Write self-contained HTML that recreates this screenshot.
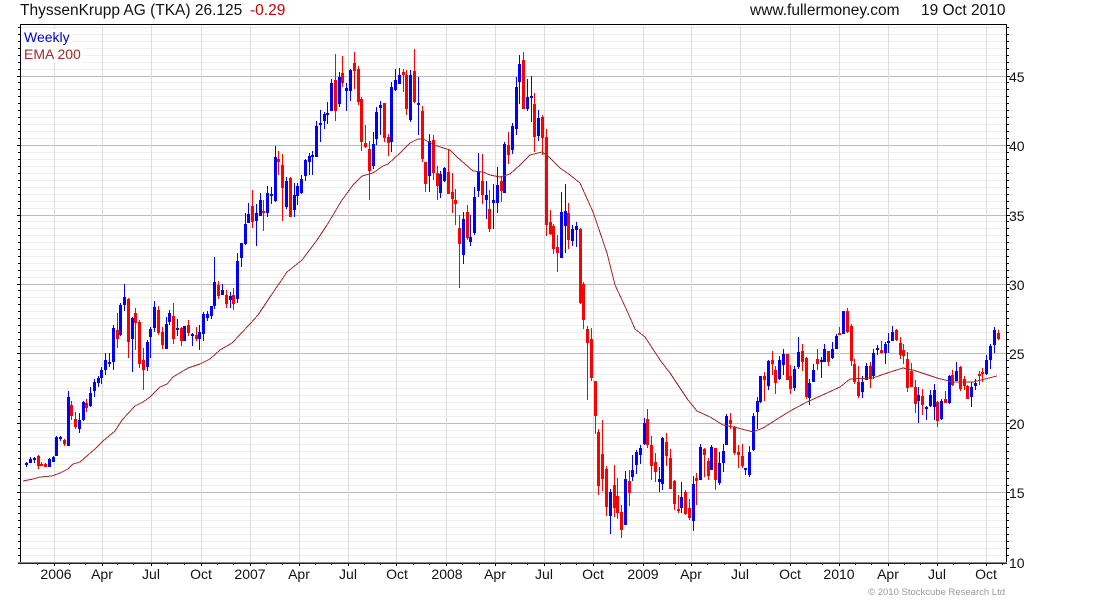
<!DOCTYPE html>
<html><head><meta charset="utf-8"><title>ThyssenKrupp AG (TKA)</title>
<style>html,body{margin:0;padding:0;background:#fff}svg{display:block}text{font-family:"Liberation Sans",Arial,sans-serif;font-size:14px;fill:#111}</style>
</head><body>
<svg width="1100" height="600" viewBox="0 0 1100 600" xmlns="http://www.w3.org/2000/svg">
<defs>
<path id="m" d="M0 555.5h1M0 548.5h1M0 541.5h1M0 534.5h1M0 527.5h1M0 520.5h1M0 513.5h1M0 506.5h1M0 499.5h1M0 485.5h1M0 478.5h1M0 471.5h1M0 464.5h1M0 458.5h1M0 451.5h1M0 444.5h1M0 437.5h1M0 430.5h1M0 416.5h1M0 409.5h1M0 402.5h1M0 395.5h1M0 388.5h1M0 381.5h1M0 374.5h1M0 367.5h1M0 360.5h1M0 346.5h1M0 339.5h1M0 332.5h1M0 325.5h1M0 318.5h1M0 311.5h1M0 304.5h1M0 297.5h1M0 290.5h1M0 277.5h1M0 270.5h1M0 263.5h1M0 256.5h1M0 249.5h1M0 242.5h1M0 235.5h1M0 228.5h1M0 221.5h1M0 208.5h1M0 201.5h1M0 194.5h1M0 187.5h1M0 180.5h1M0 173.5h1M0 166.5h1M0 159.5h1M0 152.5h1M0 138.5h1M0 131.5h1M0 124.5h1M0 117.5h1M0 110.5h1M0 103.5h1M0 96.5h1M0 89.5h1M0 82.5h1M0 69.5h1M0 62.5h1M0 55.5h1M0 48.5h1M0 41.5h1M0 34.5h1M0 27.5h1" fill="none" stroke-width="1"/>
<path id="M" d="M0 76.5h1M0 145.5h1M0 215.5h1M0 284.5h1M0 353.5h1M0 423.5h1M0 492.5h1" fill="none" stroke-width="1"/>
</defs>
<g shape-rendering="crispEdges">
<use href="#m" transform="translate(21,0) scale(985,1)" stroke="#eeeeee"/>
<use href="#M" transform="translate(21,0) scale(985,1)" stroke="#bbbbbb"/>
<path fill="none" stroke="#dddddd" stroke-width="1" d="M54.5 25V562M102.5 25V562M151.5 25V562M201.5 25V562M250.5 25V562M299.5 25V562M348.5 25V562M396.5 25V562M446.5 25V562M495.5 25V562M544.5 25V562M593.5 25V562M643.5 25V562M691.5 25V562M740.5 25V562M790.5 25V562M839.5 25V562M888.5 25V562M937.5 25V562M986.5 25V562"/>
<use href="#m" transform="translate(18,0) scale(2,1)" stroke="#000"/>
<use href="#M" transform="translate(17,0) scale(3,1)" stroke="#000"/>
<use href="#m" transform="translate(1007,0) scale(2,1)" stroke="#000"/>
<use href="#M" transform="translate(1007,0) scale(3,1)" stroke="#000"/>
<path fill="none" stroke="#000" stroke-width="1" d="M37.5 563v2M69.5 563v2M85.5 563v2M117.5 563v2M133.5 563v2M167.5 563v2M184.5 563v2M217.5 563v2M233.5 563v2M266.5 563v2M282.5 563v2M315.5 563v2M331.5 563v2M364.5 563v2M380.5 563v2M413.5 563v2M429.5 563v2M462.5 563v2M479.5 563v2M511.5 563v2M527.5 563v2M560.5 563v2M576.5 563v2M610.5 563v2M626.5 563v2M659.5 563v2M675.5 563v2M707.5 563v2M724.5 563v2M756.5 563v2M773.5 563v2M806.5 563v2M822.5 563v2M855.5 563v2M871.5 563v2M904.5 563v2M920.5 563v2M953.5 563v2M969.5 563v2M1002.5 563v2M54.5 563v3M102.5 563v3M151.5 563v3M201.5 563v3M250.5 563v3M299.5 563v3M348.5 563v3M396.5 563v3M446.5 563v3M495.5 563v3M544.5 563v3M593.5 563v3M643.5 563v3M691.5 563v3M740.5 563v3M790.5 563v3M839.5 563v3M888.5 563v3M937.5 563v3M986.5 563v3"/>
<rect x="20" y="24" width="987" height="1" fill="#000"/>
<rect x="20" y="24" width="1" height="540" fill="#000"/>
<rect x="1006" y="24" width="1" height="540" fill="#000"/>
<rect x="18" y="562" width="989" height="1" fill="#888"/>
<rect x="18" y="563" width="989" height="1" fill="#222"/>
<rect x="22" y="29" width="50" height="17" fill="#fff"/>
<rect x="22" y="46" width="61" height="17" fill="#fff"/>

<path fill="none" stroke="#0000ff" stroke-width="1" d="M26.5 462V467M30.5 457V463M34.5 457V463M49.5 458V467M53.5 456V462M56.5 436V456M60.5 436V441M68.5 391V446M79.5 413V433M83.5 401V421M90.5 387V407M94.5 379V397M98.5 376V387M101.5 367V384M105.5 353V375M109.5 353V367M113.5 325V370M120.5 303V336M124.5 284V311M132.5 317V372M147.5 340V371M150.5 327V358M154.5 301V332M166.5 317V349M169.5 310V325M177.5 319V336M184.5 326V341M192.5 333V346M199.5 325V350M203.5 312V341M207.5 311V321M211.5 306V319M214.5 257V309M222.5 284V295M230.5 292V308M237.5 253V303M241.5 243V267M245.5 213V245M248.5 203V223M256.5 204V246M260.5 193V216M267.5 186V217M271.5 187V204M275.5 146V202M286.5 177V209M294.5 183V217M297.5 183V205M301.5 175V194M305.5 159V181M309.5 153V175M312.5 151V175M316.5 121V157M320.5 110V142M324.5 112V129M327.5 102V124M331.5 79V111M339.5 72V107M346.5 83V111M350.5 69V101M373.5 132V169M376.5 107V145M380.5 101V135M391.5 82V152M395.5 69V91M399.5 68V84M410.5 70V122M418.5 77V135M429.5 134V192M440.5 171V198M444.5 167V182M463.5 212V264M470.5 215V246M474.5 187V235M478.5 153V197M486.5 181V219M493.5 184V229M497.5 167V213M504.5 142V193M512.5 123V154M516.5 77V135M519.5 55V104M527.5 79V111M531.5 76V122M538.5 110V141M561.5 192V258M565.5 184V253M572.5 225V246M576.5 222V247M610.5 489V534M625.5 471V525M632.5 455V481M636.5 450V474M640.5 445V464M644.5 418V445M659.5 467V492M662.5 437V490M681.5 482V513M693.5 476V531M700.5 444V480M711.5 445V470M719.5 452V485M723.5 444V472M726.5 414V445M745.5 468V475M749.5 446V477M753.5 413V451M757.5 397V429M760.5 376V403M768.5 360V390M779.5 356V380M783.5 349V375M794.5 366V391M798.5 337V369M809.5 379V405M813.5 364V382M821.5 357V378M824.5 344V362M832.5 342V359M836.5 334V349M843.5 311V334M862.5 376V398M866.5 363V380M873.5 349V379M877.5 345V355M885.5 342V364M888.5 333V353M892.5 326V341M918.5 387V423M926.5 406V420M930.5 390V407M934.5 384V420M941.5 399V420M949.5 375V404M956.5 362V381M971.5 382V407M975.5 379V390M986.5 355V375M990.5 344V369M994.5 327V353"/>
<path fill="none" stroke="#0000ff" stroke-width="3" d="M26.5 463V465M30.5 459V463M34.5 458V460M49.5 459V467M53.5 457V462M56.5 437V456M60.5 437V439M68.5 397V446M79.5 420V429M83.5 402V420M90.5 393V406M94.5 382V391M98.5 378V383M101.5 370V378M105.5 360V370M109.5 362V364M113.5 328V362M120.5 305V335M124.5 297V305M132.5 318V339M147.5 342V367M150.5 329V337M154.5 307V328M166.5 324V349M169.5 313V322M177.5 328V330M184.5 326V341M192.5 334V336M199.5 332V339M203.5 314V334M207.5 314V318M211.5 306V316M214.5 282V306M222.5 290V295M230.5 296V300M237.5 261V299M241.5 243V258M245.5 224V244M248.5 214V223M256.5 213V221M260.5 200V216M267.5 193V213M271.5 194V196M275.5 157V201M286.5 181V207M294.5 195V210M297.5 186V196M301.5 179V193M305.5 160V176M309.5 156V162M312.5 155V157M316.5 126V157M320.5 123V125M324.5 114V121M327.5 113V115M331.5 83V111M339.5 77V104M346.5 88V91M350.5 70V91M373.5 144V166M376.5 112V139M380.5 105V108M391.5 87V142M395.5 80V90M399.5 75V84M410.5 75V120M418.5 103V105M429.5 141V176M440.5 174V193M444.5 168V181M463.5 219V255M470.5 237V242M474.5 197V233M478.5 171V191M486.5 195V200M493.5 200V203M497.5 185V203M504.5 144V193M512.5 126V150M516.5 87V129M519.5 64V82M527.5 97V109M531.5 96V98M538.5 118V136M561.5 212V258M565.5 211V226M572.5 229V241M576.5 226V230M610.5 492V516M625.5 479V525M632.5 470V477M636.5 452V465M640.5 448V455M644.5 423V444M659.5 479V482M662.5 438V484M681.5 497V508M693.5 484V521M700.5 447V480M711.5 447V470M719.5 463V483M723.5 451V463M726.5 416V445M745.5 468V470M749.5 452V475M753.5 416V450M757.5 401V412M760.5 376V402M768.5 361V386M779.5 360V379M783.5 354V365M794.5 369V388M798.5 352V367M809.5 383V398M813.5 370V382M821.5 360V362M824.5 349V362M832.5 349V358M836.5 336V349M843.5 311V334M862.5 382V392M866.5 366V380M873.5 353V376M877.5 348V350M885.5 344V353M888.5 341V343M892.5 332V341M918.5 395V401M926.5 407V409M930.5 395V406M934.5 390V407M941.5 401V419M949.5 376V403M956.5 371V381M971.5 387V397M975.5 383V386M986.5 360V374M990.5 346V360M994.5 330V345"/>

<path fill="none" stroke="#ff0000" stroke-width="1" d="M38.5 455V469M41.5 462V466M45.5 463V467M64.5 439V446M71.5 401V420M75.5 412V429M86.5 399V412M117.5 313V348M128.5 298V358M135.5 308V350M139.5 320V368M143.5 348V390M158.5 306V335M162.5 327V349M173.5 303V344M181.5 327V346M188.5 320V336M196.5 327V341M218.5 281V299M226.5 290V308M233.5 288V310M252.5 190V228M263.5 200V231M278.5 151V175M282.5 154V221M290.5 177V217M335.5 54V121M342.5 56V87M354.5 52V89M358.5 66V105M361.5 97V151M365.5 125V148M369.5 141V200M384.5 103V142M388.5 134V156M403.5 69V92M406.5 70V115M414.5 49V103M422.5 106V162M425.5 162V192M433.5 135V180M437.5 166V200M448.5 150V194M452.5 173V213M455.5 189V225M459.5 215V288M467.5 205V240M482.5 154V204M489.5 190V232M501.5 177V202M508.5 132V164M523.5 52V109M534.5 93V152M542.5 115V155M546.5 129V236M550.5 210V235M553.5 224V254M557.5 235V272M568.5 203V249M580.5 228V304M583.5 282V329M587.5 326V400M591.5 328V381M595.5 381V434M598.5 429V495M602.5 420V491M606.5 466V516M614.5 465V517M617.5 478V519M621.5 505V538M629.5 470V506M647.5 409V448M651.5 436V480M655.5 453V482M666.5 433V466M670.5 449V489M674.5 480V510M678.5 495V513M685.5 490V515M689.5 499V520M696.5 473V505M704.5 448V477M708.5 458V480M715.5 448V490M730.5 413V429M734.5 426V455M738.5 445V468M742.5 444V468M764.5 372V401M772.5 351V375M775.5 366V394M787.5 354V380M790.5 365V394M802.5 344V371M806.5 357V399M817.5 349V370M828.5 351V366M839.5 327V335M847.5 308V333M851.5 324V366M854.5 359V384M858.5 366V398M870.5 362V388M881.5 341V354M896.5 329V341M900.5 337V359M903.5 344V364M907.5 352V392M911.5 363V387M915.5 380V413M922.5 389V415M937.5 401V427M945.5 391V403M952.5 370V386M960.5 366V391M964.5 376V390M967.5 385V399M979.5 371V385M982.5 368V382M998.5 330V340"/>
<path fill="none" stroke="#ff0000" stroke-width="3" d="M38.5 456V466M41.5 464V466M45.5 464V467M64.5 440V444M71.5 405V416M75.5 419V427M86.5 403V408M117.5 330V339M128.5 299V342M135.5 313V323M139.5 322V364M143.5 360V370M158.5 310V333M162.5 332V345M173.5 316V339M181.5 328V341M188.5 325V333M196.5 335V339M218.5 285V296M226.5 295V304M233.5 295V304M252.5 206V222M263.5 211V213M278.5 159V162M282.5 165V188M290.5 178V217M335.5 80V111M342.5 73V83M354.5 63V71M358.5 69V102M361.5 99V142M365.5 143V147M369.5 149V171M384.5 103V138M388.5 137V143M403.5 72V75M406.5 75V109M414.5 71V102M422.5 111V159M425.5 162V184M433.5 140V173M437.5 173V186M448.5 172V194M452.5 192V199M455.5 200V204M459.5 228V244M467.5 212V238M482.5 181V195M489.5 209V229M501.5 181V191M508.5 145V155M523.5 60V109M534.5 104V137M542.5 117V138M546.5 137V225M550.5 222V234M553.5 226V249M557.5 247V253M568.5 213V240M580.5 229V303M583.5 284V320M587.5 329V343M591.5 339V378M595.5 381V416M598.5 432V486M602.5 454V479M606.5 469V507M614.5 485V508M617.5 496V513M621.5 512V530M629.5 481V493M647.5 419V445M651.5 445V466M655.5 462V472M666.5 442V456M670.5 458V489M674.5 481V504M678.5 509V511M685.5 492V514M689.5 508V518M696.5 478V481M704.5 449V455M708.5 461V476M715.5 448V480M730.5 420V424M734.5 427V453M738.5 452V455M742.5 456V466M764.5 376V380M772.5 360V364M775.5 370V383M787.5 354V380M790.5 376V389M802.5 351V362M806.5 358V397M817.5 359V364M828.5 351V362M839.5 333V335M847.5 311V332M851.5 326V361M854.5 364V382M858.5 382V396M870.5 366V379M881.5 350V353M896.5 330V340M900.5 343V355M903.5 350V356M907.5 359V388M911.5 371V387M915.5 387V404M922.5 396V405M937.5 402V421M945.5 399V403M952.5 375V385M960.5 367V389M964.5 379V386M967.5 386V399M979.5 374V376M982.5 372V374M998.5 333V339"/>

<polyline fill="none" stroke="#a52a2a" stroke-width="1" points="23,481 33,479 40,477 52,476 60,473 68,469 73,464 80,462 88,455 95,449 103,441 115,431 122,420 135,406 143,402 150,397 160,387 167,384 173,377 188,368 200,364 210,359 220,350 232,343 250,324 258,315 270,297 287,272 302,260 317,240 327,225 342,200 353,185 362,176 373,173 383,166 388,164 400,153 410,143 418,139 423,139 437,146 450,150 457,157 465,164 473,171 483,172 490,175 500,177 510,174 520,165 530,155 542,152 548,156 560,168 570,175 580,183 593,212 607,253 615,285 622,300 628,313 635,329 645,337 660,360 670,373 688,400 697,411 710,417 723,425 738,428 753,432 763,428 790,411 807,402 827,393 840,387 850,379 873,378 887,373 903,368 913,370 937,378 953,382 973,382 997,376"/>
</g>

<text x="20" y="15" style="font-size:15.5px">ThyssenKrupp AG (TKA) 26.125</text>
<text x="250" y="15" style="font-size:15.5px;fill:#cc0000">-0.29</text>
<text x="750" y="15" style="font-size:15.5px">www.fullermoney.com</text>
<text x="921" y="15" style="font-size:15.5px">19 Oct 2010</text>
<text x="24" y="42" style="fill:#0000cc">Weekly</text>
<text x="24" y="59" style="fill:#a52a2a">EMA 200</text>

<text x="1009" y="82">45</text>
<text x="1009" y="151">40</text>
<text x="1009" y="221">35</text>
<text x="1009" y="290">30</text>
<text x="1009" y="359">25</text>
<text x="1009" y="429">20</text>
<text x="1009" y="498">15</text>
<text x="1009" y="568">10</text>

<g text-anchor="middle">
<text x="56" y="579">2006</text><text x="102" y="579">Apr</text><text x="151" y="579">Jul</text><text x="201" y="579">Oct</text>
<text x="250" y="579">2007</text><text x="299" y="579">Apr</text><text x="348" y="579">Jul</text><text x="397" y="579">Oct</text>
<text x="447" y="579">2008</text><text x="495" y="579">Apr</text><text x="544" y="579">Jul</text><text x="593" y="579">Oct</text>
<text x="643" y="579">2009</text><text x="691" y="579">Apr</text><text x="740" y="579">Jul</text><text x="790" y="579">Oct</text>
<text x="839" y="579">2010</text><text x="888" y="579">Apr</text><text x="937" y="579">Jul</text><text x="986" y="579">Oct</text>
</g>
<text x="1005" y="595" text-anchor="end" style="font-size:9.5px;fill:#999">© 2010 Stockcube Research Ltd</text>
</svg>
</body></html>
